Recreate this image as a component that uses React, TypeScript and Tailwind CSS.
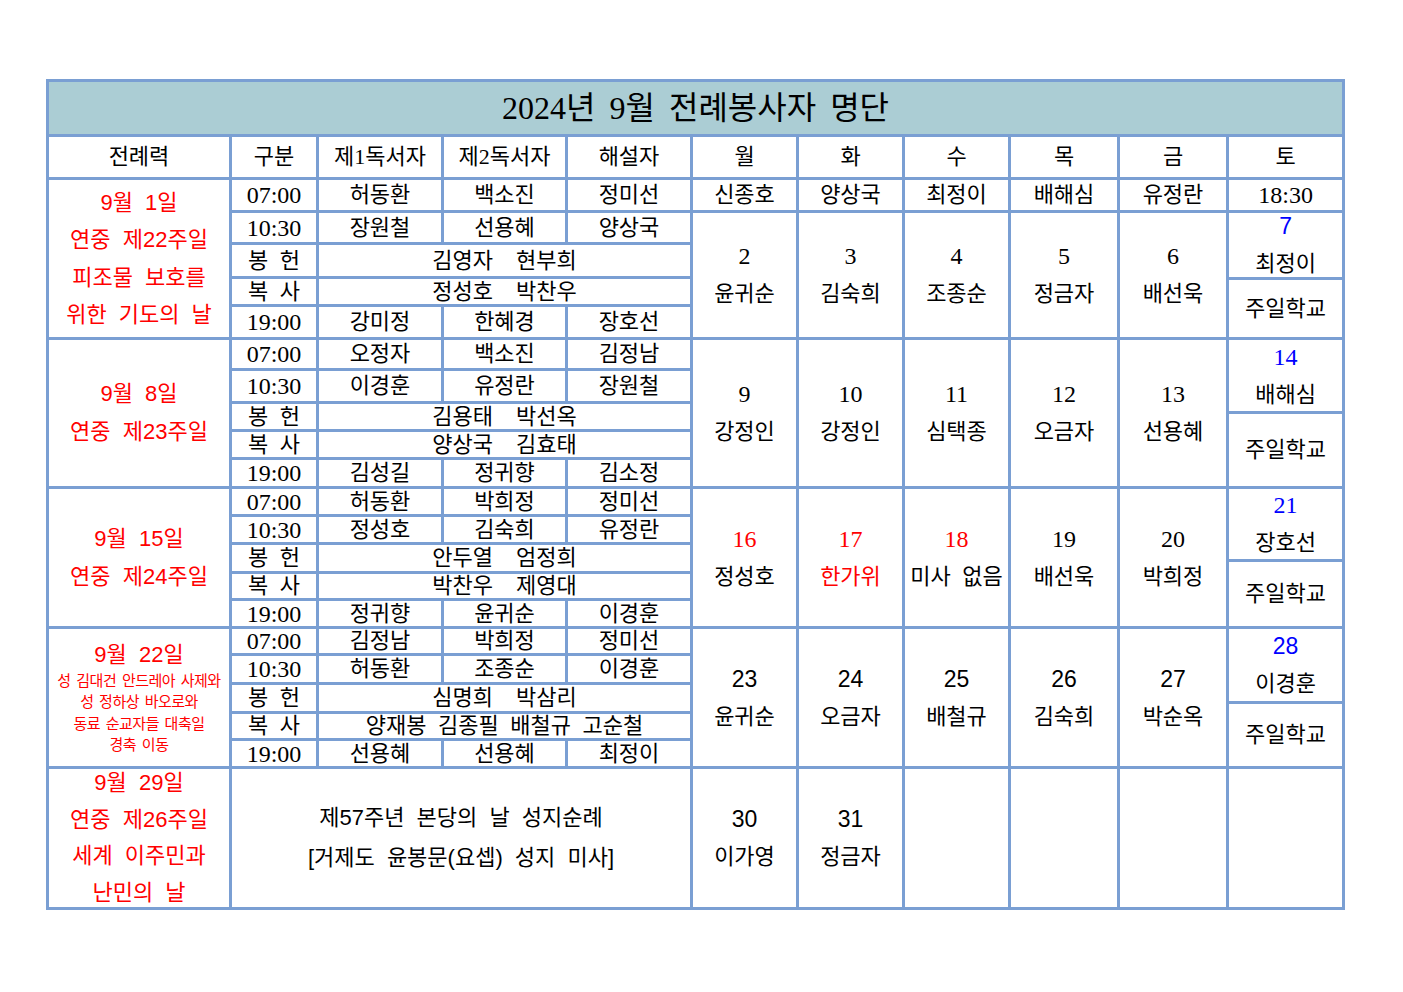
import React from "react";

const cell =
  "border-[3px] border-[#7a9fd3] p-0 text-center align-middle leading-none";
const serif = "font-['Liberation_Serif','Noto_Sans_CJK_KR',serif]";
const sans = "font-['Liberation_Sans','Noto_Sans_CJK_KR',sans-serif]";

function ServiceCells({ r }: { r: string[] }) {
  const first = /\d/.test(r[0]) ? "text-[24px]" : "";
  if (r.length === 2) {
    return (
      <>
        <td className={cell}>
          <span className="whitespace-pre">{r[0]}</span>
        </td>
        <td colSpan={3} className={cell}>
          <span className="whitespace-pre">{r[1]}</span>
        </td>
      </>
    );
  }
  return (
    <>
      {r.map((t, i) => (
        <td key={i} className={cell + " " + (i === 0 ? first : "")}>
          {t}
        </td>
      ))}
    </>
  );
}

function DayCell({
  rowSpan,
  n,
  name,
  nRed,
  nameRed,
  nSans,
}: {
  rowSpan: number;
  n: string;
  name: string;
  nRed?: boolean;
  nameRed?: boolean;
  nSans?: boolean;
}) {
  return (
    <td rowSpan={rowSpan} className={cell}>
      <div className="leading-[38px]">
        <div className={(nRed ? "text-[#ff0000] " : "") + (nSans ? sans + " text-[23px]" : "text-[24px]")}>
          {n}
        </div>
        <div className={nameRed ? "text-[#ff0000]" : ""}>{name}</div>
      </div>
    </td>
  );
}

function SatCell({
  rowSpan,
  top,
  bottom,
  n,
  name,
  nSans,
}: {
  rowSpan: number;
  top: number;
  bottom: number;
  n: string;
  name: string;
  nSans?: boolean;
}) {
  return (
    <td rowSpan={rowSpan} className={cell}>
      <div className="flex flex-col">
        <div style={{ height: top }} className="flex flex-col items-center justify-center leading-[37px]">
          <div className={"text-[#0000ff] " + (nSans ? sans + " text-[23px]" : "text-[24px]")}>{n}</div>
          <div>{name}</div>
        </div>
        <div
          style={{ height: bottom }}
          className="flex items-center justify-center border-t-[3px] border-[#7a9fd3]"
        >
          주일학교
        </div>
      </div>
    </td>
  );
}

function RedLines({ lines, lead }: { lines: string[]; lead: string }) {
  return (
    <div className={"text-[#ff0000] " + sans + " " + lead}>
      {lines.map((l, i) => (
        <div key={i} className="whitespace-pre">
          {l}
        </div>
      ))}
    </div>
  );
}

export default function App() {
  return (
    <div className={"min-h-screen w-full bg-white pl-[46px] pt-[79px] text-black " + serif}>
      <table className="w-[1296px] table-fixed border-collapse text-[22px] [word-spacing:6px]">
        <colgroup>
          <col className="w-[183px]" />
          <col className="w-[87px]" />
          <col className="w-[125px]" />
          <col className="w-[124px]" />
          <col className="w-[125px]" />
          <col className="w-[106px]" />
          <col className="w-[106px]" />
          <col className="w-[106px]" />
          <col className="w-[109px]" />
          <col className="w-[109px]" />
          <col className="w-[116px]" />
        </colgroup>
        <tbody>
          <tr className="h-[55px]">
            <td colSpan={11} className={cell + " bg-[#abcdd4] text-[32px]"}>
              <span className="whitespace-pre">2024년 9월 전례봉사자 명단</span>
            </td>
          </tr>
          <tr className="h-[43px]">
            {["전례력", "구분", "제1독서자", "제2독서자", "해설자", "월", "화", "수", "목", "금", "토"].map(
              (h) => (
                <td key={h} className={cell}>
                  {h}
                </td>
              )
            )}
          </tr>

          {/* 9월 1일 */}
          <tr className="h-[33px]">
            <td rowSpan={5} className={cell}>
              <RedLines
                lead="leading-[37.5px]"
                lines={["9월 1일", "연중 제22주일", "피조물 보호를", "위한 기도의 날"]}
              />
            </td>
            <ServiceCells r={["07:00", "허동환", "백소진", "정미선"]} />
            {["신종호", "양상국", "최정이", "배해심", "유정란"].map((t) => (
              <td key={t} className={cell}>
                {t}
              </td>
            ))}
            <td className={cell + " text-[24px]"}>18:30</td>
          </tr>
          <tr className="h-[32px]">
            <ServiceCells r={["10:30", "장원철", "선용혜", "양상국"]} />
            <DayCell rowSpan={4} n="2" name="윤귀순" />
            <DayCell rowSpan={4} n="3" name="김숙희" />
            <DayCell rowSpan={4} n="4" name="조종순" />
            <DayCell rowSpan={4} n="5" name="정금자" />
            <DayCell rowSpan={4} n="6" name="배선욱" />
            <SatCell rowSpan={4} top={64} bottom={60} n="7" name="최정이" nSans />
          </tr>
          <tr className="h-[34px]">
            <ServiceCells r={["봉 헌", "김영자  현부희"]} />
          </tr>
          <tr className="h-[28px]">
            <ServiceCells r={["복 사", "정성호  박찬우"]} />
          </tr>
          <tr className="h-[33px]">
            <ServiceCells r={["19:00", "강미정", "한혜경", "장호선"]} />
          </tr>

          {/* 9월 8일 */}
          <tr className="h-[31px]">
            <td rowSpan={5} className={cell}>
              <RedLines lead="leading-[38px]" lines={["9월 8일", "연중 제23주일"]} />
            </td>
            <ServiceCells r={["07:00", "오정자", "백소진", "김정남"]} />
            <DayCell rowSpan={5} n="9" name="강정인" />
            <DayCell rowSpan={5} n="10" name="강정인" />
            <DayCell rowSpan={5} n="11" name="심택종" />
            <DayCell rowSpan={5} n="12" name="오금자" />
            <DayCell rowSpan={5} n="13" name="선용혜" />
            <SatCell rowSpan={5} top={71} bottom={75} n="14" name="배해심" />
          </tr>
          <tr className="h-[33px]">
            <ServiceCells r={["10:30", "이경훈", "유정란", "장원철"]} />
          </tr>
          <tr className="h-[28px]">
            <ServiceCells r={["봉 헌", "김용태  박선옥"]} />
          </tr>
          <tr className="h-[28px]">
            <ServiceCells r={["복 사", "양상국  김효태"]} />
          </tr>
          <tr className="h-[29px]">
            <ServiceCells r={["19:00", "김성길", "정귀향", "김소정"]} />
          </tr>

          {/* 9월 15일 */}
          <tr className="h-[28px]">
            <td rowSpan={5} className={cell}>
              <RedLines lead="leading-[38px]" lines={["9월 15일", "연중 제24주일"]} />
            </td>
            <ServiceCells r={["07:00", "허동환", "박희정", "정미선"]} />
            <DayCell rowSpan={5} n="16" name="정성호" nRed />
            <DayCell rowSpan={5} n="17" name="한가위" nRed nameRed />
            <DayCell rowSpan={5} n="18" name="미사 없음" nRed />
            <DayCell rowSpan={5} n="19" name="배선욱" />
            <DayCell rowSpan={5} n="20" name="박희정" />
            <SatCell rowSpan={5} top={70} bottom={67} n="21" name="장호선" />
          </tr>
          <tr className="h-[28px]">
            <ServiceCells r={["10:30", "정성호", "김숙희", "유정란"]} />
          </tr>
          <tr className="h-[29px]">
            <ServiceCells r={["봉 헌", "안두열  엄정희"]} />
          </tr>
          <tr className="h-[27px]">
            <ServiceCells r={["복 사", "박찬우  제영대"]} />
          </tr>
          <tr className="h-[28px]">
            <ServiceCells r={["19:00", "정귀향", "윤귀순", "이경훈"]} />
          </tr>

          {/* 9월 22일 */}
          <tr className="h-[27px]">
            <td rowSpan={5} className={cell}>
              <div className={"text-[#ff0000] " + sans}>
                <div className="leading-[30px]">9월 22일</div>
                <div className="text-[15px] leading-[21.5px] tracking-[-0.5px] [word-spacing:2px]">
                  <div>성 김대건 안드레아 사제와</div>
                  <div>성 정하상 바오로와</div>
                  <div>동료 순교자들 대축일</div>
                  <div>경축 이동</div>
                </div>
              </div>
            </td>
            <ServiceCells r={["07:00", "김정남", "박희정", "정미선"]} />
            <DayCell rowSpan={5} n="23" name="윤귀순" nSans />
            <DayCell rowSpan={5} n="24" name="오금자" nSans />
            <DayCell rowSpan={5} n="25" name="배철규" nSans />
            <DayCell rowSpan={5} n="26" name="김숙희" nSans />
            <DayCell rowSpan={5} n="27" name="박순옥" nSans />
            <SatCell rowSpan={5} top={72} bottom={65} n="28" name="이경훈" nSans />
          </tr>
          <tr className="h-[29px]">
            <ServiceCells r={["10:30", "허동환", "조종순", "이경훈"]} />
          </tr>
          <tr className="h-[29px]">
            <ServiceCells r={["봉 헌", "심명희  박삼리"]} />
          </tr>
          <tr className="h-[27px]">
            <ServiceCells r={["복 사", "양재봉 김종필 배철규 고순철"]} />
          </tr>
          <tr className="h-[28px]">
            <ServiceCells r={["19:00", "선용혜", "선용혜", "최정이"]} />
          </tr>

          {/* 9월 29일 */}
          <tr className="h-[141px]">
            <td className={cell}>
              <div className={"flex h-[136px] flex-col justify-between text-[#ff0000] " + sans}>
                {["9월 29일", "연중 제26주일", "세계 이주민과", "난민의 날"].map((l) => (
                  <div key={l} className="leading-[26px]">
                    {l}
                  </div>
                ))}
              </div>
            </td>
            <td colSpan={4} className={cell}>
              <div className={"leading-[40px] " + sans}>
                <div>제57주년 본당의 날 성지순례</div>
                <div>[거제도 윤봉문(요셉) 성지 미사]</div>
              </div>
            </td>
            <DayCell rowSpan={1} n="30" name="이가영" nSans />
            <DayCell rowSpan={1} n="31" name="정금자" nSans />
            <td className={cell}></td>
            <td className={cell}></td>
            <td className={cell}></td>
            <td className={cell}></td>
          </tr>
        </tbody>
      </table>
    </div>
  );
}
